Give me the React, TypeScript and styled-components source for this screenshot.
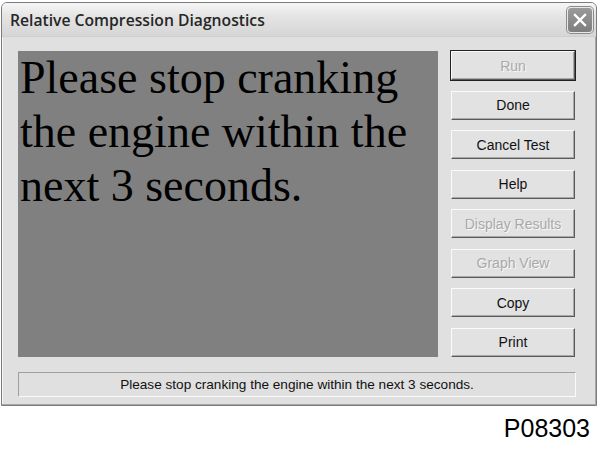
import React from 'react';
import styled, { createGlobalStyle } from 'styled-components';

const buttons: { label: string; disabled?: boolean; isDefault?: boolean }[] = [
  { label: 'Run', disabled: true, isDefault: true },
  { label: 'Done' },
  { label: 'Cancel Test' },
  { label: 'Help' },
  { label: 'Display Results', disabled: true },
  { label: 'Graph View', disabled: true },
  { label: 'Copy' },
  { label: 'Print' },
];

const App: React.FC = () => {
  return (
    <>
      <GlobalStyle />
      <Window>
        <TitleBar>
          <Title>Relative Compression Diagnostics</Title>
          <CloseButton aria-label="Close">
            <svg width="16" height="16" viewBox="0 0 16 16">
              <path d="M3 3 L13 13 M13 3 L3 13" stroke="#fff" strokeWidth="2.4" strokeLinecap="square" />
            </svg>
          </CloseButton>
        </TitleBar>
        <Body>
          <Main>
            <MessagePanel>
              Please stop cranking the engine within the next 3 seconds.
            </MessagePanel>
            <ButtonColumn>
              {buttons.map(b => (
                <Button key={b.label} $disabled={b.disabled} $isDefault={b.isDefault}>
                  {b.label}
                </Button>
              ))}
            </ButtonColumn>
          </Main>
          <StatusBar>Please stop cranking the engine within the next 3 seconds.</StatusBar>
        </Body>
      </Window>
      <FigureLabel>P08303</FigureLabel>
    </>
  );
};

export default App;

const GlobalStyle = createGlobalStyle`
  body {
    margin: 0;
    background: #fff;
    font-family: "Liberation Sans", Arial, sans-serif;
  }
`;

const Window = styled.div`
  margin: 2px 0 0 1px;
  width: 596px;
  height: 404px;
  box-sizing: border-box;
  border: 1px solid #7c7c7c;
  border-radius: 6px 6px 0 0;
  background: #e0e0e0;
  box-shadow: inset -1px -1px 0 #a8a8a8, inset 1px 0 0 #f4f4f4;
  display: flex;
  flex-direction: column;
  overflow: hidden;
`;

const TitleBar = styled.div`
  height: 33px;
  flex: none;
  display: flex;
  align-items: center;
  justify-content: space-between;
  padding: 0 3px 0 8px;
  background: linear-gradient(#f6f6f6, #e4e4e4 40%, #d6d6d6);
  border-bottom: 1px solid #cfcfcf;
`;

const Title = styled.span`
  font-family: "Open Sans", "DejaVu Sans", sans-serif;
  font-weight: 600;
  font-size: 15.7px;
  color: #262626;
`;

const CloseButton = styled.div`
  width: 26px;
  height: 26px;
  box-sizing: border-box;
  border: 1px solid #e8e8e8;
  border-radius: 4px;
  background: linear-gradient(#9a9a9a, #7e7e7e);
  box-shadow: 0 0 0 1px #8a8a8a;
  display: flex;
  align-items: center;
  justify-content: center;
`;

const Body = styled.div`
  flex: 1;
  display: flex;
  flex-direction: column;
  padding: 14px 20px 0 16px;
`;

const Main = styled.div`
  display: flex;
  gap: 13px;
`;

const MessagePanel = styled.div`
  width: 420px;
  height: 306px;
  box-sizing: border-box;
  padding: 0 0 0 2px;
  background: #808080;
  color: #000;
  font-family: "Liberation Serif", "Times New Roman", serif;
  font-size: 46px;
  line-height: 54px;
`;

const ButtonColumn = styled.div`
  width: 124px;
  height: 306px;
  display: flex;
  flex-direction: column;
  justify-content: space-between;
`;

const Button = styled.div<{ $disabled?: boolean; $isDefault?: boolean }>`
  height: 29px;
  box-sizing: border-box;
  display: flex;
  align-items: center;
  justify-content: center;
  background: #e2e2e2;
  font-size: 14px;
  color: ${p => (p.$disabled ? '#a9a9a9' : '#111')};
  text-shadow: ${p => (p.$disabled ? '1px 1px 0 #f8f8f8' : 'none')};
  border-top: 1px solid #fafafa;
  border-left: 1px solid #fafafa;
  border-right: 1px solid #5a5a5a;
  border-bottom: 1px solid #5a5a5a;
  box-shadow: inset -1px -1px 0 #a8a8a8;
  outline: ${p => (p.$isDefault ? '1px solid #202020' : 'none')};
`;

const StatusBar = styled.div`
  margin-top: 15px;
  height: 25px;
  box-sizing: border-box;
  display: flex;
  align-items: center;
  justify-content: center;
  border-top: 1px solid #a0a0a0;
  border-left: 1px solid #a0a0a0;
  border-right: 1px solid #fafafa;
  border-bottom: 1px solid #fafafa;
  font-size: 13.6px;
  color: #111;
`;

const FigureLabel = styled.div`
  width: 590px;
  margin-top: 7px;
  text-align: right;
  font-family: "Liberation Sans", Arial, sans-serif;
  font-size: 25px;
  line-height: 30px;
  color: #000;
`;
